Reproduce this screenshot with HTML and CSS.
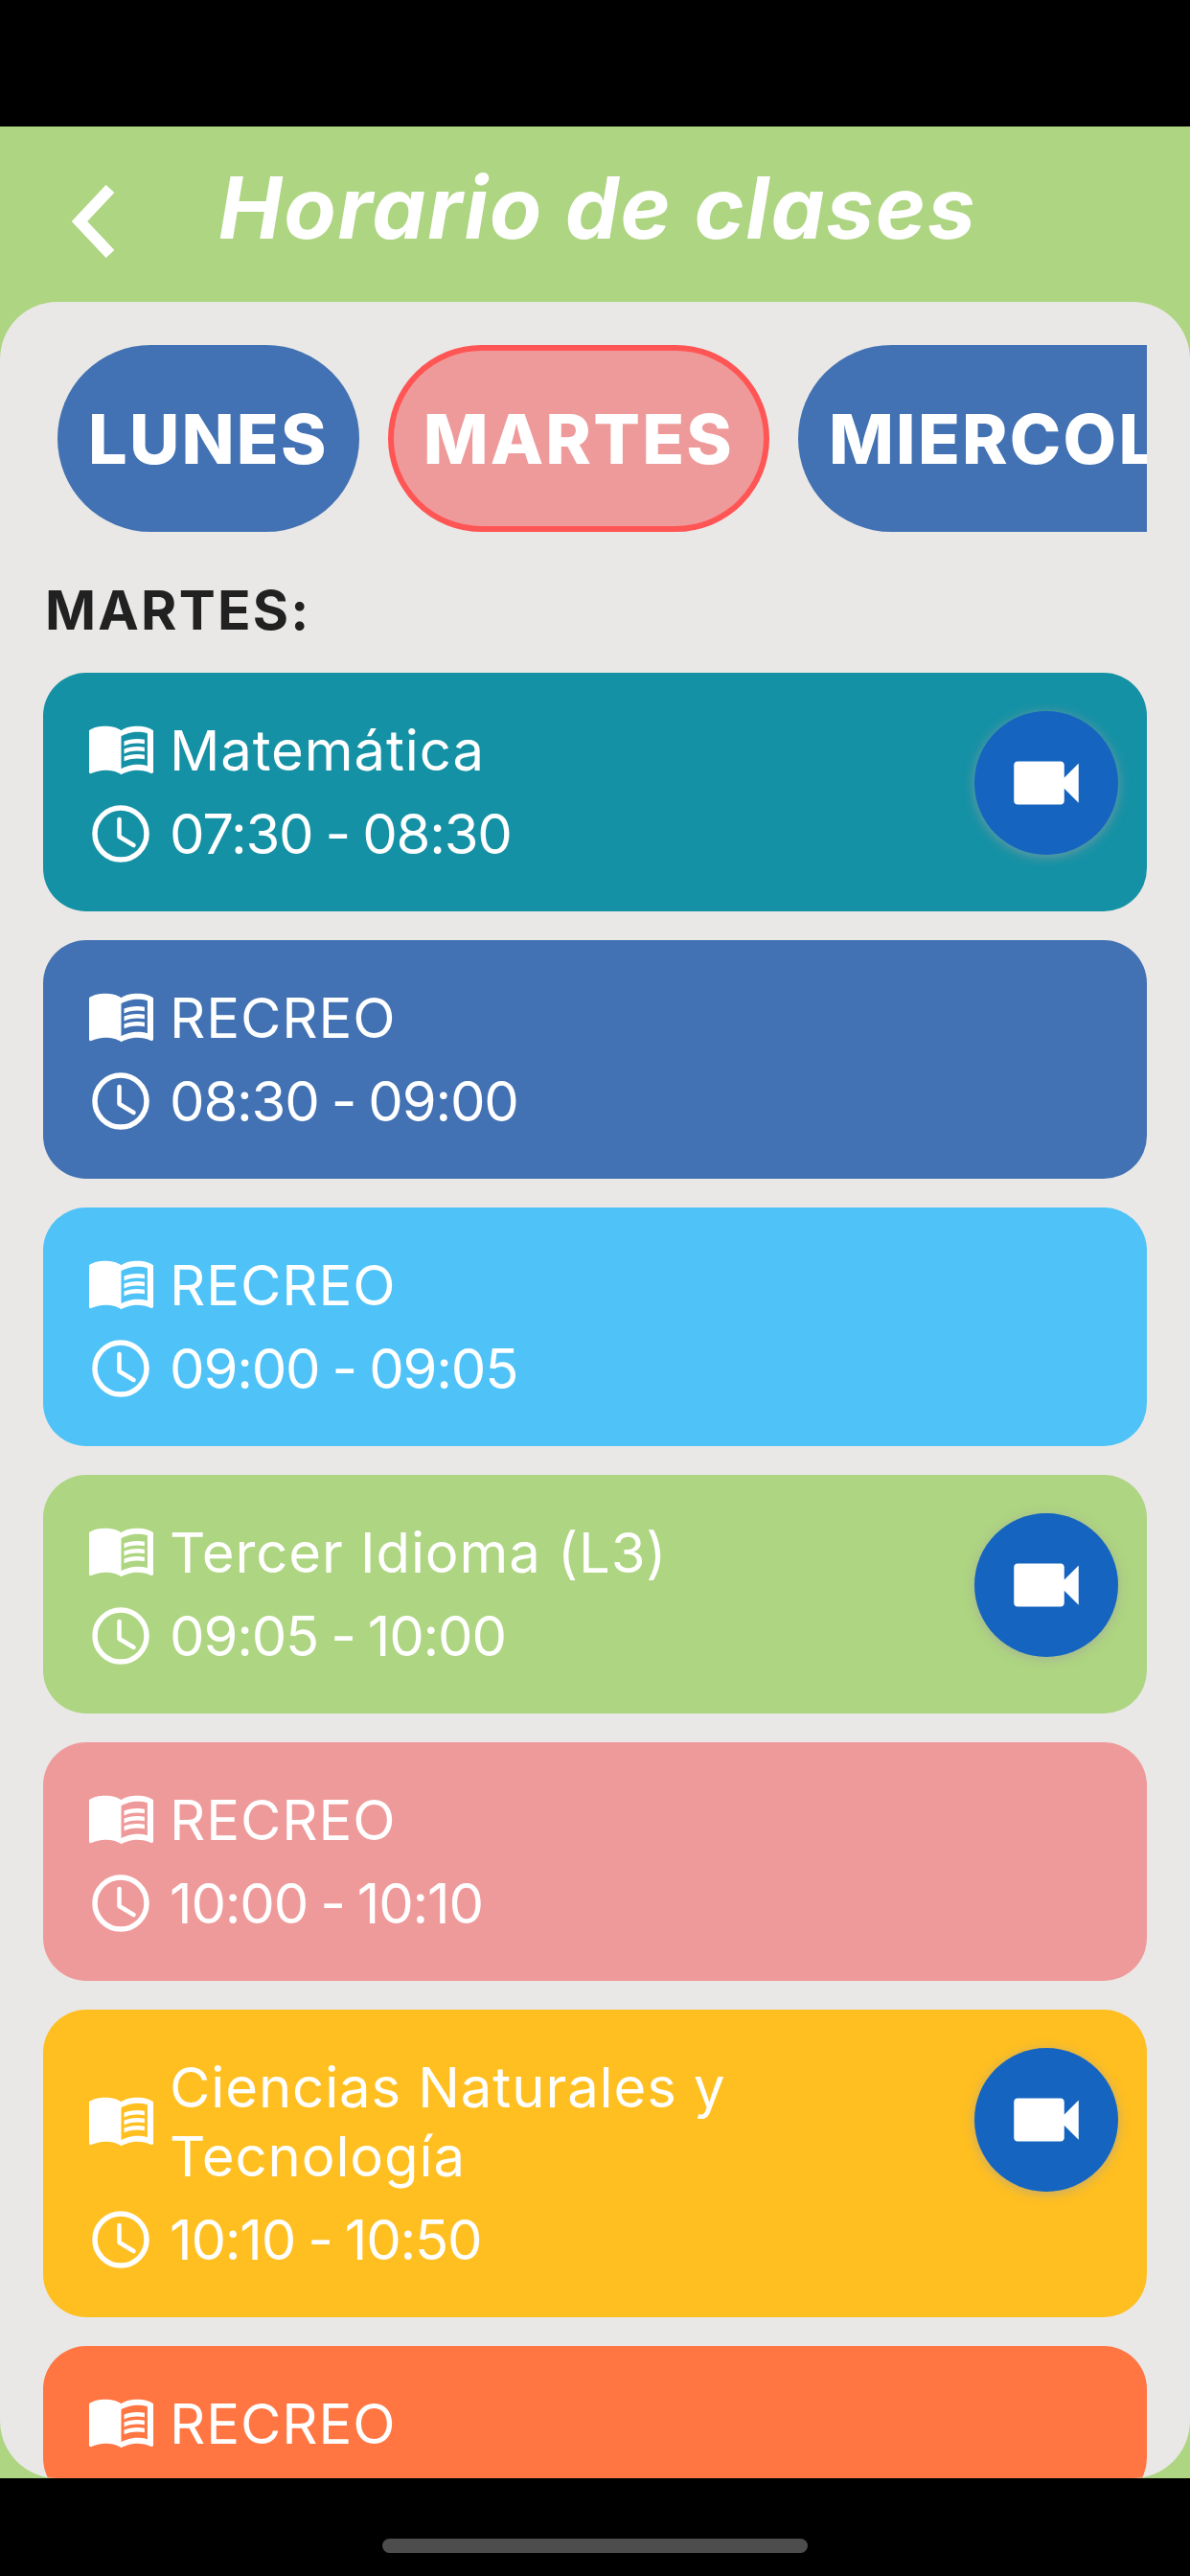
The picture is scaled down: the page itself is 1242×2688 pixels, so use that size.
FILE: index.html
```html
<!DOCTYPE html>
<html>
<head lang="es">
    <meta charset="UTF-8">
    <title>Horario de clases</title>
    <link rel="stylesheet" href="styles.css">
</head>
<body>
<svg class="defs" width="0" height="0">
    <symbol id="book" viewBox="1 4.25 22 17.5" preserveAspectRatio="none">
        <path d="M21 5c-1.11-.35-2.33-.5-3.5-.5-1.95 0-4.05.4-5.5 1.5-1.45-1.1-3.55-1.5-5.5-1.5S2.45 4.9 1 6v14.65c0 .25.25.5.5.5.1 0 .15-.05.25-.05C3.1 20.45 5.05 20 6.5 20c1.95 0 4.05.4 5.5 1.5 1.35-.85 3.8-1.5 5.5-1.5 1.65 0 3.35.3 4.75 1.05.1.05.15.05.25.05.25 0 .5-.25.5-.5V6c-.6-.45-1.25-.75-2-1zm0 13.5c-1.1-.35-2.3-.5-3.5-.5-1.7 0-4.15.65-5.5 1.5V8c1.35-.85 3.8-1.5 5.5-1.5 1.2 0 2.4.15 3.5.5v11.5z"/>
        <path d="M17.5 10.5c.88 0 1.73.09 2.5.26V9.24c-.79-.15-1.64-.24-2.5-.24-1.7 0-3.24.29-4.5.83v1.66c1.13-.64 2.7-.99 4.5-.99zM13 12.49v1.66c1.13-.64 2.7-.99 4.5-.99.88 0 1.73.09 2.5.26V11.9c-.79-.15-1.64-.24-2.5-.24-1.7 0-3.24.3-4.5.83zM17.5 14.33c-1.7 0-3.24.29-4.5.83v1.66c1.13-.64 2.7-.99 4.5-.99.88 0 1.73.09 2.5.26v-1.52c-.79-.16-1.64-.24-2.5-.24z"/>
    </symbol>
    <symbol id="clock" viewBox="0 0 60 60">
        <circle cx="30" cy="30" r="27" fill="none" stroke="#fff" stroke-width="5.5"/>
        <path d="M28.500 15v18l15 9" fill="none" stroke="#fff" stroke-width="4.500" stroke-linecap="round" stroke-linejoin="round"/>
    </symbol>
    <symbol id="cam" viewBox="0 0 24 24">
        <path d="M17 10.5V7c0-.55-.45-1-1-1H4c-.55 0-1 .45-1 1v10c0 .55.45 1 1 1h12c.55 0 1-.45 1-1v-3.5l4 4v-11l-4 4z"/>
    </symbol>
</svg>
<div class="topbar"></div>
<div class="screen">
    <header class="head">
        <svg class="back" viewBox="0 0 48 76"><path d="M41 4L9 38l32 34" fill="none" stroke="#fff" stroke-width="12"/></svg>
        <h1 class="title">Horario de clases</h1>
    </header>
    <main class="panel">
        <div class="tabs">
            <span class="tab">LUNES</span>
            <span class="tab active">MARTES</span>
            <span class="tab">MIERCOLES</span>
        </div>
        <h2 class="day">MARTES:</h2>
        <div class="list">
            <div class="card teal">
                <div class="info">
                    <div class="row"><svg class="ico-book"><use href="#book"/></svg><span>Matemática</span></div>
                    <div class="row time"><svg class="ico-clock"><use href="#clock"/></svg><span>07:30 - 08:30</span></div>
                </div>
                <div class="call"><svg class="ico-cam"><use href="#cam"/></svg></div>
            </div>
            <div class="card blue">
                <div class="info">
                    <div class="row"><svg class="ico-book"><use href="#book"/></svg><span>RECREO</span></div>
                    <div class="row time"><svg class="ico-clock"><use href="#clock"/></svg><span>08:30 - 09:00</span></div>
                </div>
            </div>
            <div class="card sky">
                <div class="info">
                    <div class="row"><svg class="ico-book"><use href="#book"/></svg><span>RECREO</span></div>
                    <div class="row time"><svg class="ico-clock"><use href="#clock"/></svg><span>09:00 - 09:05</span></div>
                </div>
            </div>
            <div class="card green">
                <div class="info">
                    <div class="row"><svg class="ico-book"><use href="#book"/></svg><span>Tercer Idioma (L3)</span></div>
                    <div class="row time"><svg class="ico-clock"><use href="#clock"/></svg><span>09:05 - 10:00</span></div>
                </div>
                <div class="call"><svg class="ico-cam"><use href="#cam"/></svg></div>
            </div>
            <div class="card pink">
                <div class="info">
                    <div class="row"><svg class="ico-book"><use href="#book"/></svg><span>RECREO</span></div>
                    <div class="row time"><svg class="ico-clock"><use href="#clock"/></svg><span>10:00 - 10:10</span></div>
                </div>
            </div>
            <div class="card yellow">
                <div class="info">
                    <div class="row"><svg class="ico-book"><use href="#book"/></svg><span>Ciencias Naturales y Tecnología</span></div>
                    <div class="row time"><svg class="ico-clock"><use href="#clock"/></svg><span>10:10 - 10:50</span></div>
                </div>
                <div class="call"><svg class="ico-cam"><use href="#cam"/></svg></div>
            </div>
            <div class="card orange">
                <div class="info">
                    <div class="row"><svg class="ico-book"><use href="#book"/></svg><span>RECREO</span></div>
                </div>
            </div>
        </div>
    </main>
</div>
<div class="bottombar"><div class="homebar"></div></div>
</body>
</html>
```

FILE: styles.css
```css
* {
    margin: 0;
    padding: 0;
    box-sizing: border-box;
}

html, body {
    height: 2688px;
}

body {
    display: flex;
    flex-direction: column;
    background: #000000;
    font-family: Inter, "Liberation Sans", sans-serif;
    color: #ffffff;
    overflow: hidden;
}

.defs {
    display: none;
}

.topbar {
    height: 132px;
    flex: none;
}

.screen {
    height: 2454px;
    flex: none;
    display: flex;
    flex-direction: column;
    background: #aed581;
}

.head {
    height: 183px;
    flex: none;
    display: flex;
    align-items: flex-start;
    padding-left: 74px;
}

.back {
    width: 48px;
    height: 76px;
    margin-top: 61px;
}

.title {
    margin-left: 106px;
    margin-top: 32px;
    font-size: 89px;
    font-weight: 700;
    font-style: italic;
    line-height: 105px;
    letter-spacing: 1.7px;
    white-space: nowrap;
}

.panel {
    flex: 1;
    min-height: 0;
    overflow: hidden;
    background: #e9e8e6;
    border-radius: 60px;
    padding: 45px 45px 0 45px;
}

.tabs {
    display: flex;
    gap: 30px;
    height: 195px;
    padding-left: 15px;
    overflow: hidden;
}

.tab {
    flex: none;
    display: flex;
    align-items: center;
    height: 195px;
    padding: 0 32px;
    border-radius: 98px;
    background: #4272b3;
    font-size: 72px;
    font-weight: 800;
    letter-spacing: 2.2px;
}

.tab.active {
    background: #ef9a9a;
    border: 6px solid #ff5555;
    padding: 0 31px;
}

.day {
    margin-top: 47px;
    padding-left: 2px;
    font-size: 57px;
    font-weight: 700;
    line-height: 69px;
    color: #212121;
    letter-spacing: 2.2px;
}

.list {
    display: flex;
    flex-direction: column;
    gap: 30px;
    margin-top: 31px;
}

.card {
    display: flex;
    justify-content: space-between;
    align-items: flex-start;
    padding: 0 30px 0 48px;
    border-radius: 45px;
    flex: none;
}

.info {
    flex: 1;
    min-width: 0;
    display: flex;
    flex-direction: column;
    gap: 15px;
    padding: 45px 40px 45px 0;
}

.row {
    display: flex;
    align-items: center;
    font-size: 58px;
    line-height: 72px;
    letter-spacing: 0.9px;
}

.row.time {
    letter-spacing: -1.2px;
    word-spacing: -2px;
}

.row svg {
    flex: none;
    fill: #ffffff;
}

.ico-book {
    width: 67px;
    height: 52px;
    margin-right: 17px;
}

.ico-clock {
    width: 60px;
    height: 60px;
    margin: 0 21px 0 3px;
}

.call {
    flex: none;
    width: 150px;
    height: 150px;
    margin-top: 40px;
    border-radius: 50%;
    background: #1565c0;
    box-shadow: 0 2px 12px rgba(160, 160, 160, 0.65);
    display: flex;
    align-items: center;
    justify-content: center;
}

.ico-cam {
    width: 90px;
    height: 90px;
    fill: #ffffff;
}

.teal { background: #1591a5; }
.blue { background: #4272b3; }
.sky { background: #4fc3f7; }
.green { background: #aed581; }
.pink { background: #ef9a9a; }
.yellow { background: #ffbf20; }
.orange { background: #ff7643; }

.bottombar {
    flex: 1;
    display: flex;
    justify-content: center;
    padding-top: 63px;
    background: #000000;
}

.homebar {
    width: 444px;
    height: 15px;
    border-radius: 8px;
    background: #4d4d4d;
}
```
